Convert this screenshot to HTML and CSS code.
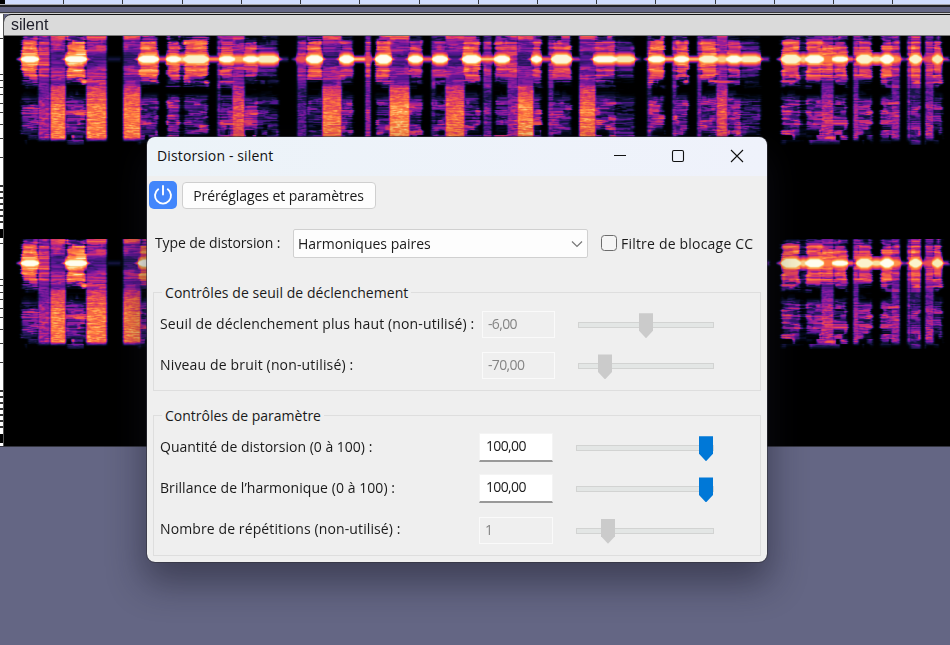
FILE: index.html
```html
<!DOCTYPE html>
<html lang="fr">
<head>
<meta charset="utf-8">
<title>Distorsion - silent</title>
<link rel="stylesheet" href="styles.css">
</head>
<body>
<main class="workspace">
  <div class="timeline"></div>
  <div class="divider"></div>
  <section class="track">
    <div class="scale"><div class="scale-top"></div><div class="scale-lane"></div><div class="scale-lane"></div></div>
    <div class="clip">
      <header class="clip-title">silent</header>
      <div class="lane"><canvas class="spectrum" width="946" height="110"></canvas></div>
      <div class="lane"><canvas class="spectrum" width="946" height="110"></canvas></div>
    </div>
  </section>
</main>

<section class="dialog">
  <header class="titlebar">
    <span class="title">Distorsion - silent</span>
    <svg class="caption" viewBox="0 0 14 14"><path d="M1 6.5H13"/></svg>
    <svg class="caption maximize" viewBox="0 0 14 14"><rect x="1.5" y="1.5" width="11" height="11" rx="1.4"/></svg>
    <svg class="caption" viewBox="0 0 14 14"><path d="M1 1L13 13M13 1L1 13"/></svg>
  </header>
  <div class="toolbar">
    <button class="power"><svg viewBox="0 0 28 28"><path d="M9.2 8.2A8 8 0 1 0 18.8 8.2M14 5V13.5"/></svg></button>
    <button class="presets"><span class="t-presets">Préréglages et paramètres</span></button>
  </div>
  <div class="type-row">
    <span class="type-label">Type de distorsion :</span>
    <div class="combo"><span>Harmoniques paires</span><svg viewBox="0 0 12 8"><path d="M1 1.5L6 6.5L11 1.5"/></svg></div>
    <label class="check"><span class="box"></span><span class="t-check">Filtre de blocage CC</span></label>
  </div>
  <div class="group threshold">
    <span class="legend t-seuil">Contrôles de seuil de déclenchement</span>
    <div class="row off"><span class="name t-haut">Seuil de déclenchement plus haut (non-utilisé) :</span><span class="field">-6,00</span><div class="slider"><i class="thumb" style="margin-left:61px"></i></div></div>
    <div class="row off"><span class="name t-bruit">Niveau de bruit (non-utilisé) :</span><span class="field">-70,00</span><div class="slider"><i class="thumb" style="margin-left:20px"></i></div></div>
  </div>
  <div class="group params">
    <span class="legend">Contrôles de paramètre</span>
    <div class="row"><span class="name">Quantité de distorsion (0 à 100) :</span><span class="field">100,00</span><div class="slider"><i class="thumb" style="margin-left:123px"></i></div></div>
    <div class="row"><span class="name t-brillance">Brillance de l’harmonique (0 à 100) :</span><span class="field">100,00</span><div class="slider"><i class="thumb" style="margin-left:123px"></i></div></div>
    <div class="row off"><span class="name t-nombre">Nombre de répétitions (non-utilisé) :</span><span class="field">1</span><div class="slider"><i class="thumb" style="margin-left:25px"></i></div></div>
  </div>
</section>
<script src="spectrum.js"></script>
</body>
</html>
```
FILE: styles.css
```css
* { box-sizing: border-box; }
body { margin: 0; width: 950px; height: 645px; overflow: hidden; background: #646684; font-family: "Open Sans", "Noto Sans", sans-serif; font-size: 14px; color: #1a1a1a; }
.workspace { display: flex; flex-direction: column; }
.timeline { height: 4px; margin-left: 5px; background: repeating-linear-gradient(90deg, transparent 0 58.2px, #34363e 58.2px 59.22px), #d2deff; box-shadow: -5px 0 0 #000; }
.divider { height: 10px; background: linear-gradient(#a5a5a9 0 1px, #222226 1px 3px, #646684 3px 8px, #38383c 8px 9px, #d0d0d0 9px); }
.track { display: flex; height: 433px; border-bottom: 1px solid #33343f; }
.scale { width: 4px; height: 432px; display: flex; flex-direction: column; border-right: 1px solid #555; background: #fff; }
.scale-top { height: 21px; }
.scale-lane { height: 205px; background:
  linear-gradient(#000, #000) 0 194px / 3px 9px no-repeat,
  repeating-linear-gradient(transparent 0 4px, #333 4px 6px) 0 146px / 3px 46px no-repeat,
  linear-gradient(#333, #333) 0 3px / 3px 1px no-repeat,
  linear-gradient(#333, #333) 0 39px / 3px 1px no-repeat,
  linear-gradient(#333, #333) 0 45px / 3px 1px no-repeat,
  linear-gradient(#333, #333) 0 52px / 3px 1px no-repeat,
  linear-gradient(#333, #333) 0 59px / 3px 1px no-repeat,
  linear-gradient(#333, #333) 0 68px / 3px 1px no-repeat,
  linear-gradient(#333, #333) 0 77px / 3px 1px no-repeat,
  linear-gradient(#333, #333) 0 89px / 3px 1px no-repeat,
  linear-gradient(#333, #333) 0 103px / 3px 1px no-repeat,
  linear-gradient(#333, #333) 0 122px / 3px 1px no-repeat, #fff; }
.clip { width: 946px; height: 432px; background: #000; border-top: 1px solid #111; border-radius: 8px 0 0 0; }
.clip-title { position: relative; height: 21px; margin-bottom: -1px; padding-left: 7px; background: #dadada; border-bottom: 1px solid #777; border-radius: 7px 0 0 0; font: 16px/20px "Liberation Sans", Arial, sans-serif; color: #1c1c28; }
.lane { height: 204px; overflow: hidden; }
.spectrum { display: block; }

.dialog { position: absolute; left: 147px; top: 137px; width: 620px; height: 425px; border-radius: 8px; overflow: hidden; background: #efefef; outline: 1px solid rgba(50,50,60,.6); box-shadow: 0 18px 36px 3px rgba(20,20,35,.48); }
.titlebar { height: 39px; display: flex; align-items: center; padding: 0 23px 0 10px; gap: 44.5px; background: linear-gradient(100deg, #ecf3f8, #eff2fb); color: #111; }
.title { flex: 1; margin-top: -2px; font-size: 14px; letter-spacing: .14px; white-space: nowrap; }
.caption { width: 14px; height: 14px; margin-top: -1px; fill: none; stroke: #111; stroke-width: 1.1; }
.maximize { margin-left: -1px; margin-right: 1px; }
.toolbar { display: flex; align-items: center; gap: 5px; height: 38px; padding-left: 2px; }
.power { width: 28px; height: 28px; padding: 0; border: 0; border-radius: 5px; background: #4286fb; }
.power svg { display: block; fill: none; stroke: #fff; stroke-width: 1.9; stroke-linecap: round; }
.presets { width: 194px; height: 27px; margin-top: 1px; padding: 0 1px 0 0; border: 1px solid #cfcfcf; border-radius: 4px; background: #fdfdfd; font: inherit; color: inherit; }
.presets span, .name, .legend, .combo span, .check span, .type-label { white-space: nowrap; }
.type-row { display: flex; align-items: center; height: 29px; margin-top: 15px; padding-left: 8px; }
.type-label { width: 138px; margin-top: -3px; letter-spacing: -.1px; }
.combo { width: 295px; height: 29px; display: flex; align-items: center; justify-content: space-between; padding: 0 4px; background: #fdfdfd; border: 1px solid #d0d0d0; border-radius: 2px; }
.combo svg { width: 12px; fill: none; stroke: #777; stroke-width: 1.2; }
.check { display: flex; align-items: center; gap: 4px; margin: -1px 0 0 13px; }
.box { width: 16px; height: 16px; border: 1px solid #6c6c6c; border-radius: 3.5px; background: #f5f5f5; }
.group { position: relative; width: 608px; margin-left: 6px; border: 1px solid #dedede; padding: 12px 0 0 6px; }
.threshold { height: 99px; margin-top: 34px; }
.params { height: 141px; margin-top: 24px; }
.legend { position: absolute; left: 8px; top: -10px; line-height: 20px; padding: 0 3px; background: #efefef; }
.row { display: flex; align-items: center; height: 41.3px; line-height: 20px; }
.name { width: 319px; margin-top: -4px; }
.field { width: 74px; height: 29px; margin-top: -2px; padding: 2px 0 0 6px; background: #fff; border: 1px solid #f4f4f4; border-bottom: 2px solid #999; letter-spacing: -.65px; }
.slider { width: 138px; height: 25px; margin-left: 23px; background: linear-gradient(#e3e6e5, #e3e6e5) 1px 10px / calc(100% - 2px) 4px no-repeat, linear-gradient(#d2d3d2, #d2d3d2) 0 9px / 100% 6px no-repeat; }
.thumb { display: block; width: 14px; height: 25px; background: #0078d7; clip-path: polygon(0 0, 100% 0, 100% 70%, 50% 100%, 0 70%); }
.off .field { height: 27px; padding: 2px 0 0 5px; margin-top: -2px; background: #efefef; border: 1px solid #fafafa; color: #858585; }
.off .thumb { background: #cbcbcb; }
.threshold .name { width: 322px; }
.threshold .field { width: 73px; }
.threshold .slider { width: 136px; margin-left: 23px; }
.t-presets { letter-spacing: -.08px; }
.t-check { letter-spacing: .2px; }
.t-seuil { letter-spacing: .06px; }
.t-haut { letter-spacing: .13px; }
.t-bruit { letter-spacing: .16px; }
.t-brillance { letter-spacing: .06px; }
.t-nombre { letter-spacing: .11px; }
```
FILE: spectrum.js
```javascript
// Segments: x0, x1, centre ridge, ridge half-height, harmonics, low band, pillar.
const segments = [
  [22,38,1,4,.65,.3,0],[38,50,.3,2,.5,0,.5],[50,66,.3,2,.48,0,.75],[66,86,1,4,.7,.42,0],[86,107,.3,2,.48,0,.75],[107,122,.22,1,0,0,0],
  [123,141,.3,2,.42,0,.75],[139,158,1,5,.65,.36,0],[158,168,.65,2,0,0,0],[167,180,1,4,.58,.46,0],[179,186,.9,3,.2,.1,0],[184,208,.97,6,.62,.36,0],[208,219,.8,2,0,0,0],
  [217,221,.5,3,.4,.2,.36],[220,234,1,4,.52,.35,0],[232,245,.85,3,.48,0,.65],[244,258,1,4,.48,.42,0],[257,278,.96,5,.25,.22,0],[278,288,.35,1,0,0,0],
  [297,307,.65,4,.4,.2,.34],[307,322,1,6,.6,.3,0],[322,342,.45,3,.42,0,.75],[340,353,1,6,.45,.35,0],[352,364,.9,2,0,0,0],
  [365,371,.65,5,.5,.4,.5],[371,377,.6,3,0,0,0],[376,391,1,7,.58,.36,0],[389,410,.45,2,.44,0,.8],[409,422,1,5,.45,.35,0],[422,430,.7,2,0,0,0],
  [431,436,.5,4,.35,.3,.28],[433,447,1,5,.42,.3,0],[445,465,.4,2,.42,0,.7],[463,480,1,6,.6,.37,0],[479,497,.9,2,0,0,0],[483,492,.7,3,.4,.3,.35],
  [495,509,1,5,.5,.36,0],[507,518,.6,3,.5,.4,.46],[517,534,.3,3,.42,0,.76],[532,541,1,5,.53,.42,0],[541,549,.7,2,0,0,0],[548,554,.5,4,.42,.35,.42],
  [552,571,.98,7,.54,.35,0],[571,581,.6,2,0,0,0],[579,596,.42,3,.44,0,.73],[594,616,1,4,.5,.42,0],[615,634,.95,4,.25,.2,0],[634,641,.35,1,0,0,0],
  [647,652,.6,3,.42,.3,.35],[649,664,1,4,.6,.42,0],[663,673,.88,2,0,0,0],[672,677,.6,3,.45,.3,.42],[675,688,1,4,.6,.4,0],[687,699,.88,2,0,0,0],
  [697,702,.6,3,.45,.3,.45],[700,717,.97,5,.62,.42,0],[716,728,.9,4,.5,0,.64],[727,741,1,5,.5,.43,0],[740,760,.96,4,.28,.2,0],[760,769,.5,2,0,0,0],
  [782,800,.97,7,.6,.38,0],[799,808,.9,4,.18,.1,0],[806,823,1,6,.6,.4,0],[821,834,.75,5,.58,.42,.52],[833,847,1,3,.55,.35,0],[846,852,.7,2,0,0,0],
  [853,859,.6,5,.52,.4,.48],[857,872,.97,7,.55,.37,0],[871,882,.93,3,0,0,0],[881,893,1,7,.6,.38,0],[891,900,.8,4,.48,.4,.46],[899,907,.45,2,0,0,0],
  [907,911,.6,4,.45,.35,.4],[910,921,.97,7,.6,.36,.3],[920,926,.62,2,0,0,0],[925,934,.65,4,.45,.35,.46],[933,942,.95,7,.55,.33,0],[941,950,.6,2,0,0,0]
];
const palette = [[0,0,0,0],[.12,4,10,28],[.24,28,24,78],[.36,86,22,146],[.46,142,28,158],[.56,204,44,116],[.66,236,80,80],[.76,255,125,62],[.86,255,176,96],[.94,246,232,170],[1,255,253,240]];
const W = 946, H = 110, left = 4;

let state = 77;
function random() {
  state = (state * 1664525 + 1013904223) >>> 0;
  return state / 4294967296;
}

// Random values that stay constant for a few pixels, giving horizontal streaks.
function noiseField(run) {
  const field = [];
  for (let y = 0; y < H; y++) {
    const row = new Float32Array(W);
    let v = random(), target = random();
    for (let x = 0; x < W; x++) {
      if (random() < 1 / run) target = random();
      v += (target - v) * .6;
      row[x] = v;
    }
    field.push(row);
  }
  return field;
}
function band(y, a, b, soft) {
  return Math.max(0, Math.min(1, (y - a) / soft, (b - y) / soft));
}
function color(v) {
  v = Math.max(0, Math.min(1, v));
  for (let i = 1; i < palette.length; i++) {
    if (v <= palette[i][0]) {
      const p = palette[i - 1], q = palette[i], t = (v - p[0]) / (q[0] - p[0]);
      return [1, 2, 3].map(k => p[k] + (q[k] - p[k]) * t);
    }
  }
  return [255, 253, 240];
}

const streak = noiseField(7), grain = noiseField(2), blotch = noiseField(9);
const level = [];
for (let y = 0; y < H; y++) {
  level.push(new Float32Array(W));
  for (let x = 0; x < W; x++) {
    const gx = x + left + .5, n = streak[y][x] - .5, g = grain[y][x] - .5;
    const m = blotch[Math.floor(y / 5)][x] - .5;
    let v = 0;
    for (const [a, b, ridge, half, harm, low, pillar] of segments) {
      const d = Math.abs(y - 23.7);
      // The centre line bleeds into its neighbours and narrows there.
      if (ridge > .6 && gx > a - 6 && gx < b + 6) {
        const inside = Math.min(gx - a, b - gx);
        const side = Math.max(0, Math.min(1, (inside + 1) / 5));
        const core = half > 2 ? .5 + half * .46 * side : .6;
        const drop = half > 2 ? .11 : .22;
        const line = ridge * Math.max(0, 1 - Math.max(0, d - core) * drop) * (d > half + 4 ? 0 : 1);
        const tail = inside < 0 ? Math.max(0, 1 + inside * .11 - d * .2) : 1;
        v = Math.max(v, inside > -1 ? line : line * tail);
      }
      const w = m * 2.4 + n * 1.2;
      const x0 = pillar ? a : a - w, x1 = pillar ? b : b + w;
      if (gx < x0 - 1.5 || gx > x1 + 1.5) continue;
      const e = Math.min(1, (gx - x0 + 1.5) / 3, (x1 + 1.5 - gx) / 3);
      let s = ridge <= .6 ? ridge * Math.max(0, 1 - d * .25) : 0;
      if (harm) {
        const edge = 27 + m * 8 + n * 4;
        const fade = band(d, -8, edge, 8);
        const ripple = pillar > .6 ? .02 : .08 * Math.cos((d - 11) * 1.05) + (d < 17 ? .06 : -.07);
        s = Math.max(s, (harm + ripple + n * .2 + m * .14) * fade * (pillar > .6 && d < 8 ? .68 : 1));
      }
      if (low) s = Math.max(s, (low + .01 + n * .34 + m * .34) * band(y, 56 + m * 8, 105 + m * 14, 9));
      if (pillar) {
        s = Math.max(s, (pillar + g * .24 + n * .14) * band(y, 46, 107, 5) * (y < 74 ? .7 + (y - 46) * .0107 : 1));
        s = Math.max(s, (pillar * .85 + n * .2) * band(y, -6, 8, 5));
        s = Math.max(s, (.42 + n * .16 + m * .12) * band(y, 2, 56, 4) * (d < 7 ? .74 : 1));
      }
      v = Math.max(v, s * e);
    }
    level[y][x] = v;
  }
}

// Light smoothing before the values are coloured.
const at = (y, x) => level[Math.max(0, Math.min(H - 1, y))][Math.max(0, Math.min(W - 1, x))];
const image = new ImageData(W, H);
for (let y = 0; y < H; y++) {
  for (let x = 0; x < W; x++) {
    const v = at(y, x) * .42 + (at(y, x - 1) + at(y, x + 1)) * .19 + (at(y - 1, x) + at(y + 1, x)) * .1;
    const i = (y * W + x) * 4, c = color(v);
    image.data[i] = c[0]; image.data[i + 1] = c[1]; image.data[i + 2] = c[2]; image.data[i + 3] = 255;
  }
}
document.querySelectorAll(".spectrum").forEach(c => c.getContext("2d").putImageData(image, 0, 0));
```
